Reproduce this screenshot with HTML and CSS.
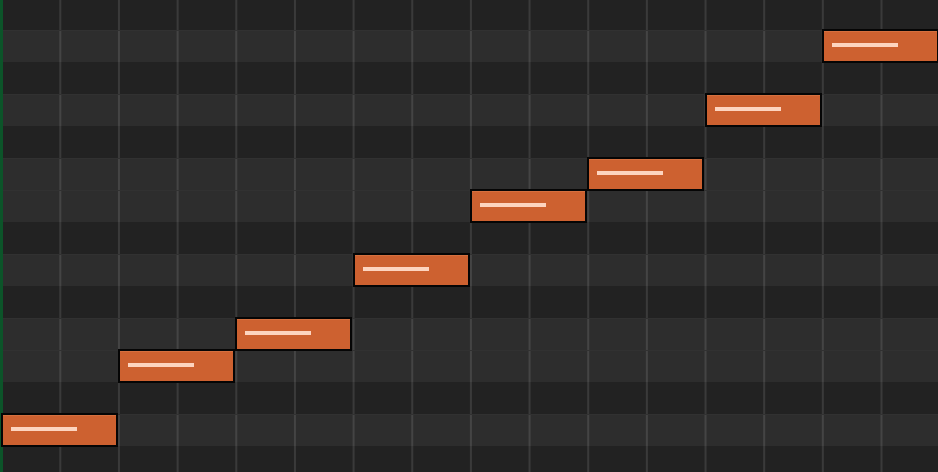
FILE: index.html
```html
<!DOCTYPE html>
<html lang="en">
<head>
    <meta charset="UTF-8">
    <meta name="viewport" content="width=device-width, initial-scale=1.0">
    <title>Piano Roll</title>
    <link rel="stylesheet" href="styles.css">
</head>
<body>
<div class="roll">
    <div class="lanes">
        <div class="lane black"></div>  <!-- A# -->
        <div class="lane white"></div>  <!-- A -->
        <div class="lane black"></div>  <!-- G# -->
        <div class="lane white"></div>  <!-- G -->
        <div class="lane black"></div>  <!-- F# -->
        <div class="lane white"></div>  <!-- F -->
        <div class="lane white"></div>  <!-- E -->
        <div class="lane black"></div>  <!-- D# -->
        <div class="lane white"></div>  <!-- D -->
        <div class="lane black"></div>  <!-- C# -->
        <div class="lane white"></div>  <!-- C -->
        <div class="lane white"></div>  <!-- B -->
        <div class="lane black"></div>  <!-- A# -->
        <div class="lane white"></div>  <!-- A -->
        <div class="lane black"></div>  <!-- G# -->
    </div>

    <div class="playhead"></div>

    <!-- notes: left = 0.67 + step * 117.33px, top = lane top - 1px -->
    <div class="note" style="left: 0.67px; top: 413px;"><span class="velocity"></span></div>
    <div class="note" style="left: 118px; top: 349px;"><span class="velocity"></span></div>
    <div class="note" style="left: 235.33px; top: 317px;"><span class="velocity"></span></div>
    <div class="note" style="left: 352.67px; top: 253px;"><span class="velocity"></span></div>
    <div class="note" style="left: 470px; top: 189px;"><span class="velocity"></span></div>
    <div class="note" style="left: 587.33px; top: 157px;"><span class="velocity"></span></div>
    <div class="note" style="left: 704.67px; top: 93px;"><span class="velocity"></span></div>
    <div class="note" style="left: 822px; top: 29px;"><span class="velocity"></span></div>
</div>
</body>
</html>
```

FILE: styles.css
```css
body {
    margin: 0;
    padding: 0;
    background-color: #222222;
    font-family: 'Liberation Sans', Arial, sans-serif;
    overflow: hidden;
}

.roll {
    position: relative;
    width: 938px;
    height: 472px;
    overflow: hidden;
}

.lanes {
    display: flex;
    flex-direction: column;
    margin-top: -2px;
}

.lane {
    height: 32px;
    box-sizing: border-box;
    background-image: linear-gradient(to right, rgba(255, 255, 255, 0.11) 0, rgba(255, 255, 255, 0.11) 2px, transparent 2px);
    background-size: 58.667px 100%;
    background-position: 0.667px 0;
    background-repeat: repeat-x;
}

.lane.black {
    background-color: #222222;
}

.lane.white {
    background-color: #2d2d2d;
    border-top: 1px solid #313131;
}

.playhead {
    position: absolute;
    left: 0;
    top: 0;
    width: 3px;
    height: 100%;
    background-color: #0c5429;
}

.note {
    position: absolute;
    width: 117px;
    height: 34px;
    box-sizing: border-box;
    border: 2px solid #050505;
    background-color: #cd6130;
    box-shadow: inset 0 1px 0 #d5703f;
}

.note .velocity {
    position: absolute;
    left: 8px;
    top: 12px;
    width: 66px;
    height: 4px;
    background-color: #fdd4bf;
}
```
